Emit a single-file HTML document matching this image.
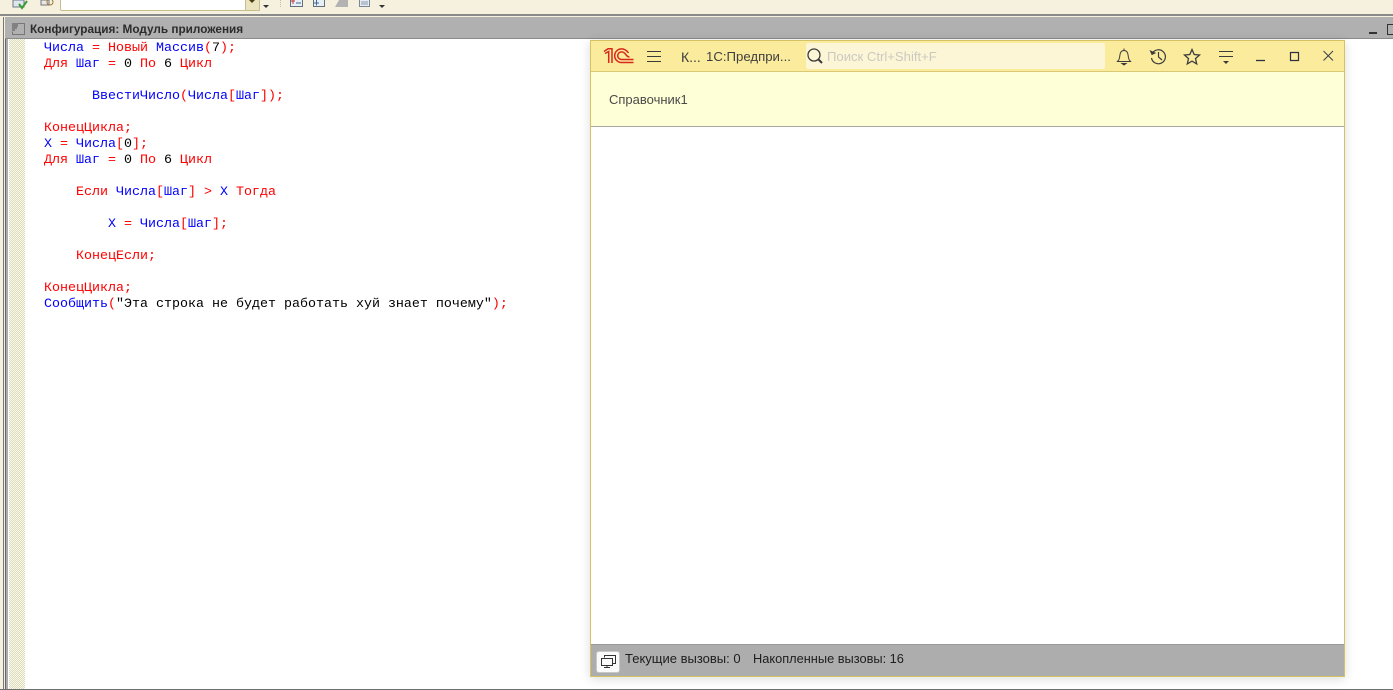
<!DOCTYPE html>
<html lang="ru"><head><meta charset="utf-8"><title>Конфигурация</title>
<style>
html,body{margin:0;padding:0;background:#fff}
#r{position:relative;width:1393px;height:690px;overflow:hidden;background:#fff;font-family:"Liberation Sans",sans-serif}
.a{position:absolute}
pre{position:absolute;left:44px;top:41px;margin:0;font:13.33px/16px "Liberation Mono",monospace;color:#f00}
pre i{font-style:normal;color:#00f}pre b{font-weight:normal;color:#000}
.t{white-space:nowrap;position:absolute}
svg{position:absolute;overflow:visible}
</style></head><body><div id="r">
<div class="a" style="left:0;top:0;width:1393px;height:14px;background:#f5f1de"></div>
<div class="a" style="left:0;top:14px;width:1393px;height:2px;background:#8a8a8a"></div>
<div class="a" style="left:0;top:16px;width:1393px;height:1px;background:#f5f1de"></div>
<div class="a" style="left:60px;top:-5px;width:185px;height:14px;background:#fff;border:1px solid #c8bd8c;border-radius:2px"></div>
<div class="a" style="left:245px;top:-5px;width:13px;height:14px;background:#ece4bf;border:1px solid #c8bd8c"></div>
<svg style="left:0;top:0" width="400" height="14">
<path d="M13 0h11v7H13z" fill="#dfe6ee" stroke="#6d7b8c"/><path d="M19 4l3 4 5-7" fill="none" stroke="#3c9a35" stroke-width="2"/>
<path d="M41 0h8v5h-8z" fill="#e8e8e8" stroke="#777"/><circle cx="50" cy="2" r="3" fill="none" stroke="#a07838"/>
<path d="M249 0h6l-3 3z" fill="#4a3c10"/><path d="M263 5h6l-3 3z" fill="#333"/><path d="M379 5h6l-3 3z" fill="#333"/>
<path d="M280.500 0v7" stroke="#bbb" stroke-dasharray="1 1"/>
<path d="M290.500 0v6.500h12v-6.500" fill="#e8eef5" stroke="#62707f"/><path d="M291 1h4M293 0v4" stroke="#c83c3c"/><path d="M296 3h5" stroke="#3c6a9a"/>
<path d="M313.500 0v6.500h11v-6.500" fill="#e8eef5" stroke="#62707f"/><path d="M314 3h5M316.500 0v5.500" stroke="#3c6a9a"/>
<path d="M335 7l4-7h9v7z" fill="#b3b3b3"/>
<path d="M359.500 0v6.500h10v-6.500" fill="#e6ecf4" stroke="#7a8794"/><path d="M361 2h7M361 4h7" stroke="#8a98a8"/>
</svg>
<div class="a" style="left:0;top:17px;width:3px;height:673px;background:#f5f1de"></div>
<div class="a" style="left:3px;top:17px;width:1px;height:673px;background:#777"></div>
<div class="a" style="left:4px;top:17px;width:1px;height:673px;background:#f5f1de"></div>
<div class="a" style="left:5px;top:17px;width:1px;height:673px;background:#666"></div>
<div class="a" style="left:6px;top:17px;width:2px;height:673px;background:#a9a9b8"></div>
<div class="a" style="left:9px;top:39px;width:16px;height:650px;background-color:#fbf9ea;background-image:conic-gradient(#dcdcbc 25%,transparent 0 50%,#dcdcbc 0 75%,transparent 0);background-size:2px 2px"></div>
<div class="a" style="left:5px;top:17px;width:1388px;height:22px;background:#b0b0b0;border-bottom:0"></div>
<div class="a" style="left:5px;top:38px;width:1388px;height:1px;background:#8a8a8a"></div>
<svg style="left:11px;top:22px" width="15" height="14"><path d="M7 1.500h6.500v11h-12v-3" fill="none" stroke="#777"/><path d="M1 2h6M1 4h6M1 6h5M1 8h3" stroke="#666" stroke-width="1.200"/></svg>
<div class="t" style="left:30px;top:23px;font:bold 11.780px/14px 'Liberation Sans',sans-serif;color:#2c2c2c">Конфигурация: Модуль приложения</div>
<div class="a" style="left:1369px;top:32px;width:8px;height:2px;background:#333"></div>
<div class="a" style="left:1387px;top:24px;width:10px;height:9px;border:1px solid #333"></div>
<div class="a" style="left:0;top:689px;width:1393px;height:1px;background:#6e6e6e"></div>
<pre><i>Числа</i> = Новый <i>Массив</i>(<b>7</b>);
Для <i>Шаг</i> = <b>0</b> По <b>6</b> Цикл

      <i>ВвестиЧисло</i>(<i>Числа</i>[<i>Шаг</i>]);

КонецЦикла;
<i>Х</i> = <i>Числа</i>[<b>0</b>];
Для <i>Шаг</i> = <b>0</b> По <b>6</b> Цикл

    Если <i>Числа</i>[<i>Шаг</i>] &gt; <i>Х</i> Тогда

        <i>Х</i> = <i>Числа</i>[<i>Шаг</i>];

    КонецЕсли;

КонецЦикла;
<i>Сообщить</i>(<b>"Эта строка не будет работать хуй знает почему"</b>);</pre>
<div class="a" style="left:590px;top:40px;width:753px;height:635px;background:#fff;border:1px solid #d4c264;box-shadow:0 2px 10px rgba(0,0,0,.14)">
<div class="a" style="left:0;top:0;width:753px;height:30px;background:#fbeb9c;border-bottom:1px solid #d9c974"></div>
<div class="a" style="left:0;top:31px;width:753px;height:54px;background:#ffffd7;border-bottom:1px solid #a8a8a0"></div>
<div class="a" style="left:0;top:603px;width:753px;height:32px;background:#adadad;border-top:1px solid #999;box-sizing:border-box"></div>
<div class="a" style="left:215px;top:2px;width:299px;height:26px;background:#fdf6d6;border-radius:2px"></div>
</div>
<svg style="left:604px;top:48px" width="30" height="16" fill="none" stroke="#d9271c">
<path d="M0 3.500L4 .8h4V15" stroke-width="1.500"/>
<path d="M4.700 15V3.500L1 5.500" stroke-width="1.500"/>
<path d="M29.500 14.500H17.500a6.800 6.800 0 0 1 0-13.600c3.700 0 5.500 2 7 4" stroke-width="1.500"/>
<path d="M29.500 11.500H17.500a3.800 3.800 0 0 1 0-7.600c2.800 0 4 2.200 5 3.500 1 1.200 2 1.600 3 1.600" stroke-width="1.500"/>
</svg>
<svg style="left:647px;top:50px" width="15" height="13"><path d="M0 1.500h14M0 6.500h14M0 11.500h14" stroke="#3a3a3a" stroke-width="1"/></svg>
<div class="t" style="left:681px;top:49px;font-size:14px;line-height:16px;color:#3f3f3f">К...</div>
<div class="t" style="left:706px;top:49px;font-size:13.200px;line-height:16px;color:#3f3f3f">1С:Предпри...</div>
<svg style="left:806px;top:47px" width="18" height="18" fill="none"><circle cx="8" cy="8" r="6" stroke="#3a3a3a" stroke-width="1.300"/><path d="M12.500 12.500l3.500 3.500" stroke="#3a3a3a" stroke-width="2"/></svg>
<div class="t" style="left:827px;top:49px;font-size:13.100px;line-height:16px;color:#c9c9c2">Поиск Ctrl+Shift+F</div>
<svg style="left:1115px;top:47px" width="220" height="20" fill="none" stroke="#3c3c3c">
<path d="M2.500 14.500h13c-2-2-2-3.500-2.500-7-.4-2.500-2-4-4-4s-3.600 1.500-4 4c-.5 3.500-.5 5-2.500 7z"/><path d="M9 1.500v2" /><path d="M7 16.500h4l-2 1.500z" fill="#3c3c3c"/>
<path d="M37.500 6a7 7 0 1 1-1 5" stroke-width="1.200"/><path d="M35.500 4l1.500 3.500 3-1.500z" fill="#3c3c3c"/><path d="M43.500 5v5l3.500 3" stroke-width="1.200"/>
<path d="M77 2.500l2.200 5 5.300.5-4 3.600 1.200 5.300-4.700-2.800-4.700 2.800 1.200-5.300-4-3.600 5.300-.5z" stroke-width="1.300"/>
<path d="M104 4.500h14M104 9.500h14"/><path d="M108 14h6l-3 3z" fill="#3c3c3c" stroke="none"/>
<path d="M141 13.500h9" stroke="#2c3244" stroke-width="1.300"/>
<path d="M175.500 5.500h8v8h-8z" stroke="#2c3244" stroke-width="1.200"/>
<path d="M208.500 4l9.500 9.500M218 4L208.500 13.500" stroke="#3c3f4c" stroke-width="1"/>
</svg>
<div class="t" style="left:609px;top:92px;font-size:13px;line-height:15px;color:#4a4a4a">Справочник1</div>
<div class="a" style="left:596px;top:651px;width:22px;height:20px;background:#fafafa;border:1px solid #c8c8c8;border-radius:3px"></div>
<svg style="left:600px;top:654px" width="18" height="15" fill="none" stroke="#333"><path d="M4.500 3.500v-2h11v8h-3"/><path d="M1.500 4.500h11v7h-11z"/><path d="M7 11.500v2M4 13.500h6"/></svg>
<div class="t" style="left:625px;top:651px;font-size:13px;line-height:15px;color:#1e1e1e">Текущие вызовы: 0</div>
<div class="t" style="left:753px;top:651px;font-size:12.800px;line-height:15px;color:#1e1e1e">Накопленные вызовы: 16</div>
</div></body></html>
